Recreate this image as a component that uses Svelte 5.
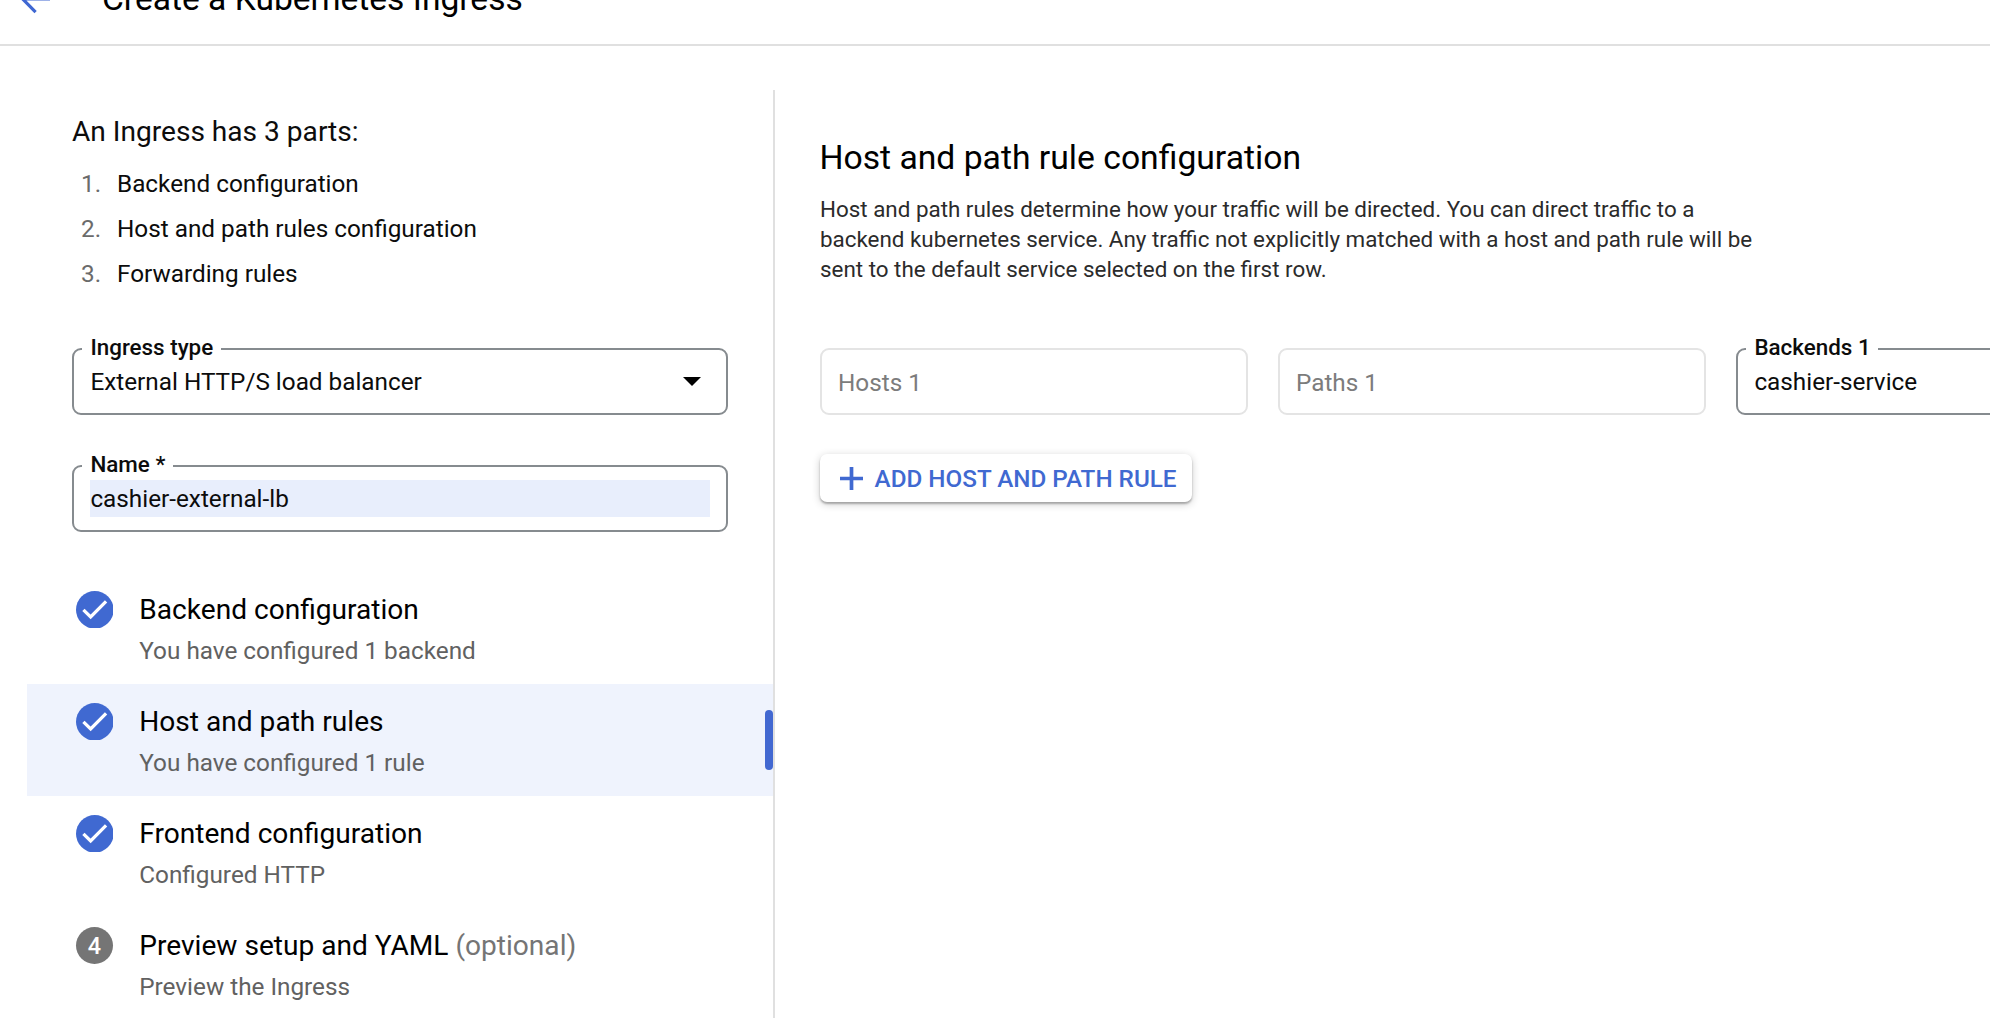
<script>
  const parts = ['Backend configuration', 'Host and path rules configuration', 'Forwarding rules']

  const steps = [
    { title: 'Backend configuration', detail: 'You have configured 1 backend', done: true },
    { title: 'Host and path rules', detail: 'You have configured 1 rule', done: true, active: true },
    { title: 'Frontend configuration', detail: 'Configured HTTP', done: true },
    { title: 'Preview setup and YAML', optional: true, detail: 'Preview the Ingress' }
  ]
</script>

<div class="page">
  <header>
    <svg class="back" viewBox="0 0 32 32" aria-hidden="true">
      <path d="M30 16H3M15.6 2.9L2.7 16l12.9 13.1" />
    </svg>
    <h1>Create a Kubernetes Ingress</h1>
  </header>

  <main>
    <aside>
      <section class="setup">
        <h2>An Ingress has 3 parts:</h2>
        <ol>
          {#each parts as part, i}
            <li><span class="num">{i + 1}.</span>{part}</li>
          {/each}
        </ol>

        <fieldset class="field">
          <legend>Ingress type</legend>
          <div class="value select">
            External HTTP/S load balancer
            <svg class="caret" viewBox="0 0 18 9" aria-hidden="true"><path d="M0 0h18L9 9z" /></svg>
          </div>
        </fieldset>

        <fieldset class="field">
          <legend>Name *</legend>
          <div class="value filled">cashier-external-lb</div>
        </fieldset>
      </section>

      <nav>
        {#each steps as step, i}
          <div class="step" class:active={step.active}>
            {#if step.done}
              <svg class="badge" viewBox="0 0 38 38" aria-hidden="true">
                <circle cx="19" cy="19" r="19" />
                <path d="M7.5 19l7.3 7.2 15.6-15.8" />
              </svg>
            {:else}
              <span class="badge number">{i + 1}</span>
            {/if}
            <div class="text">
              <div class="title">
                {step.title}
                {#if step.optional}<span class="optional">(optional)</span>{/if}
              </div>
              <div class="detail">{step.detail}</div>
            </div>
          </div>
        {/each}
      </nav>
    </aside>

    <section class="content">
      <h3>Host and path rule configuration</h3>
      <p>
        Host and path rules determine how your traffic will be directed. You can direct traffic to a
        backend kubernetes service. Any traffic not explicitly matched with a host and path rule will be
        sent to the default service selected on the first row.
      </p>

      <div class="rule">
        <div class="disabled">Hosts 1</div>
        <div class="disabled">Paths 1</div>
        <fieldset class="field">
          <legend>Backends 1</legend>
          <div class="value">cashier-service</div>
        </fieldset>
      </div>

      <button>
        <svg viewBox="0 0 23 23" aria-hidden="true"><path d="M11.5 0v23M0 11.5h23" /></svg>
        ADD HOST AND PATH RULE
      </button>
    </section>
  </main>
</div>

<style>
  :global(body) {
    margin: 0;
    background: #fff;
  }

  .page {
    height: 1018px;
    overflow: hidden;
    display: flex;
    flex-direction: column;
    font-family: Roboto, sans-serif;
    font-size: 24.3px;
    color: #0c0c0c;
  }

  header {
    box-sizing: border-box;
    flex: none;
    height: 46px;
    border-bottom: 2px solid #e0e0e0;
    padding: 0 0 25.5px 20px;
    display: flex;
    align-items: flex-end;
    gap: 50px;
  }

  .back {
    flex: none;
    width: 32px;
    height: 32px;
    margin-bottom: 3.2px;
    fill: none;
    stroke: #3f67d2;
    stroke-width: 3.2;
  }

  h1,
  h2,
  h3,
  p,
  ol {
    margin: 0;
    padding: 0;
    font-weight: 400;
  }

  h1 {
    font-size: 33.6px;
    line-height: 40px;
    color: #000;
  }

  main {
    flex: 1;
    padding-top: 44px;
    display: flex;
    min-height: 0;
  }

  aside {
    flex: none;
    width: 773px;
    border-right: 2px solid #e0e0e0;
  }

  .setup {
    padding: 24px 45px 0 72px;
  }

  h2 {
    font-size: 28.1px;
    line-height: 36px;
  }

  ol {
    list-style: none;
    margin: 10.5px 0 40.2px;
  }

  li {
    display: flex;
    padding-left: 9px;
    line-height: 45px;
  }

  .num {
    width: 36px;
    color: #6b6b6b;
  }

  .field {
    box-sizing: border-box;
    height: 79px;
    margin: 0;
    padding: 0.7px 16px 0 8px;
    border: 2px solid #868b8f;
    border-radius: 9px;
    min-width: 0;
  }

  .setup .field + .field {
    margin-top: 38px;
  }

  legend {
    padding: 0 7.7px 4.6px 8.4px;
    font-size: 22.4px;
    font-weight: 500;
    line-height: 22px;
  }

  .value {
    margin-left: 8.4px;
    line-height: 37px;
    white-space: nowrap;
  }

  .select {
    display: flex;
    justify-content: space-between;
    align-items: center;
    padding-right: 9px;
  }

  .caret {
    width: 18px;
    height: 9px;
    fill: #000;
  }

  .filled {
    background: #e8eefc;
  }

  nav {
    margin-top: 40.3px;
    padding-left: 27px;
  }

  .step {
    box-sizing: border-box;
    height: 112px;
    padding: 18.2px 0 0 48.7px;
    display: flex;
    align-items: flex-start;
    gap: 26px;
    position: relative;
  }

  .active {
    background: #eff3fd;
  }

  .active::after {
    content: '';
    position: absolute;
    right: 0;
    top: 26px;
    width: 8px;
    height: 60px;
    border-radius: 4px;
    background: #4268d1;
  }

  .badge {
    flex: none;
    width: 37.6px;
    height: 37.6px;
    margin-top: 0.6px;
  }

  .badge circle {
    fill: #4069d1;
  }

  .badge path {
    fill: none;
    stroke: #fff;
    stroke-width: 3.3;
  }

  .number {
    border-radius: 50%;
    background: #757575;
    color: #fff;
    font-size: 23.4px;
    font-weight: 500;
    line-height: 38px;
    text-align: center;
  }

  .title {
    font-size: 28.1px;
    line-height: 40px;
    color: #000;
  }

  .optional {
    color: #757575;
  }

  .detail {
    margin-top: 5px;
    line-height: 32px;
    color: #616161;
  }

  .content {
    flex: none;
    padding: 47.8px 0 0 45px;
  }

  h3 {
    margin-left: -0.6px;
    font-size: 33.7px;
    line-height: 40px;
    color: #000;
  }

  p {
    margin-top: 16.6px;
    width: 945px;
    font-size: 22.4px;
    line-height: 30px;
    color: #2b2b2b;
  }

  .rule {
    margin-top: 51.4px;
    display: flex;
    align-items: flex-end;
    gap: 30px;
  }

  .rule .field {
    width: 428px;
  }

  .disabled {
    box-sizing: border-box;
    width: 428px;
    height: 67px;
    padding: 1px 16px 0;
    border: 2px solid #e4e4e4;
    border-radius: 9px;
    line-height: 63px;
    color: #7c7c7c;
  }

  button {
    margin-top: 39px;
    width: 371.5px;
    height: 48px;
    padding: 2px 0 0 20px;
    display: flex;
    align-items: center;
    gap: 11.6px;
    border: 0;
    border-radius: 7px;
    background: #fff;
    box-shadow:
      0 2px 2px rgba(0, 0, 0, 0.26),
      0 2px 8px rgba(0, 0, 0, 0.2);
    font: 500 24.25px Roboto, sans-serif;
    white-space: nowrap;
    color: #4069d1;
  }

  button svg {
    flex: none;
    width: 23px;
    height: 23px;
    stroke: #4069d1;
    stroke-width: 3.7;
  }
</style>
